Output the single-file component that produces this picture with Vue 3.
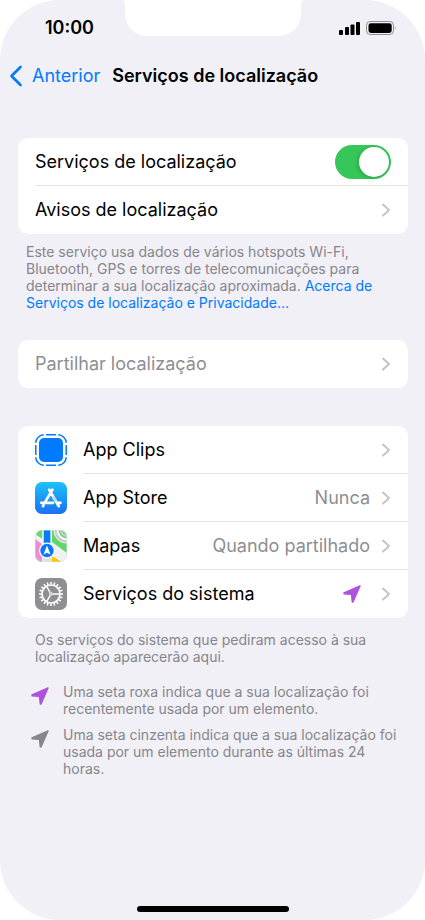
<script setup>
import { ref } from 'vue'

const enabled = ref(true)

const apps = [
  { id: 'clips', name: 'App Clips', value: '' },
  { id: 'store', name: 'App Store', value: 'Nunca' },
  { id: 'maps', name: 'Mapas', value: 'Quando partilhado' },
  { id: 'system', name: 'Serviços do sistema', value: '', arrow: true },
]

const legend = [
  { tone: 'purple', text: 'Uma seta roxa indica que a sua localização foi recentemente usada por um elemento.' },
  { tone: 'gray', text: 'Uma seta cinzenta indica que a sua localização foi usada por um elemento durante as últimas 24 horas.' },
]

const arrowPath = 'M17 1L1 8V8.700L8.500 9.400L9.300 17H10Z'
const teeth = Array.from({ length: 20 }, (_, i) => i * 18)
</script>

<template>
  <div class="phone">
    <svg class="notch" width="184" height="36" viewBox="0 0 184 36" aria-hidden="true">
      <path d="M0 0Q4 0 4 4V12C4 26 13 36 27 36H156C171 36 180 26 180 12V4Q180 0 184 0Z" fill="#fff" />
    </svg>

    <div class="status">
      <span class="time">10:00</span>
      <svg class="indicators" width="59" height="16" viewBox="0 0 59 16" aria-hidden="true">
        <rect x="1" y="10" width="4" height="5" rx="1" />
        <rect x="7" y="7" width="4" height="8" rx="1" />
        <rect x="12.500" y="4.500" width="4" height="10.500" rx="1" />
        <rect x="18" y="2" width="4" height="13" rx="1" />
        <rect x="28.500" y="1.500" width="27" height="13" rx="3.800" fill="none" stroke="#8f8f93" />
        <rect x="30.500" y="3.200" width="23.200" height="9.700" rx="2.400" />
        <path d="M56.800 6.300Q58.500 8 56.800 9.800Z" fill="#8f8f93" />
      </svg>
    </div>

    <header class="nav">
      <a class="back" href="#anterior">
        <svg width="14" height="22" viewBox="0 0 14 22" aria-hidden="true">
          <path d="M11.500 2L2.500 11L11.500 20" fill="none" stroke="currentColor" stroke-width="2.600" stroke-linecap="round" stroke-linejoin="round" />
        </svg>
        <span>Anterior</span>
      </a>
      <h1>Serviços de localização</h1>
    </header>

    <main>
      <section class="card">
        <label class="row">
          <span class="label">Serviços de localização</span>
          <input v-model="enabled" class="switch" type="checkbox" role="switch" />
        </label>
        <a class="row" href="#avisos">
          <span class="label">Avisos de localização</span>
          <svg class="chevron" width="10" height="14" viewBox="0 0 10 14" aria-hidden="true"><path d="M2 1.500L8 7L2 12.500" /></svg>
        </a>
      </section>
      <p class="note about">
        Este serviço usa dados de vários hotspots Wi-Fi, Bluetooth, GPS e torres de telecomunicações para determinar a sua localização aproximada.
        <a href="#privacidade">Acerca de Serviços de localização e Privacidade...</a>
      </p>

      <section class="card">
        <a class="row muted" href="#partilhar">
          <span class="label">Partilhar localização</span>
          <svg class="chevron" width="10" height="14" viewBox="0 0 10 14" aria-hidden="true"><path d="M2 1.500L8 7L2 12.500" /></svg>
        </a>
      </section>

      <section class="card apps">
        <a v-for="app in apps" :key="app.id" class="row" :href="'#' + app.id">
          <svg v-if="app.id === 'clips'" class="icon" viewBox="0 0 32 32" aria-hidden="true">
            <rect x="4" y="4" width="24" height="24" rx="5" fill="#007aff" />
            <g fill="none" stroke="#007aff" stroke-width="1.500">
              <path d="M11 .8H21M11 31.200H21M.8 11V21M31.200 11V21" />
              <path d="M.8 8.800Q.8 5.500 3.200 3.200Q5.500 .8 8.800 .8M23.200 .8Q26.500 .8 28.800 3.200Q31.200 5.500 31.200 8.800M31.200 23.200Q31.200 26.500 28.800 28.800Q26.500 31.200 23.200 31.200M8.800 31.200Q5.500 31.200 3.200 28.800Q.8 26.500 .8 23.200" />
            </g>
          </svg>

          <svg v-else-if="app.id === 'store'" class="icon" viewBox="0 0 32 32" aria-hidden="true">
            <defs>
              <linearGradient id="storeSky" x1="0" y1="0" x2="0" y2="1">
                <stop offset="0" stop-color="#19c3fb" />
                <stop offset="1" stop-color="#1d6ff2" />
              </linearGradient>
            </defs>
            <rect width="32" height="32" rx="7" fill="url(#storeSky)" />
            <g fill="none" stroke="#fff" stroke-width="2.700" stroke-linecap="round">
              <path d="M17.400 7.700L10.200 19.900M14.200 7.700L23.800 24.200M6.300 20.800H18M22.500 20.800H25.500M8.500 23.400L8 24.200" />
            </g>
            <path d="M18.300 14.300L21.400 19.600" stroke="#2591f6" stroke-width=".6" />
          </svg>

          <svg v-else-if="app.id === 'maps'" class="icon" viewBox="0 0 32 32" aria-hidden="true">
            <defs>
              <clipPath id="mapsTile"><rect width="32" height="32" rx="7" /></clipPath>
            </defs>
            <g clip-path="url(#mapsTile)">
              <rect width="32" height="32" fill="#f1f1f3" />
              <path d="M0 0H7.500V9L0 4Z" fill="#6bd868" />
              <path d="M0 9L7 14V32H0Z" fill="#f08bd3" />
              <path d="M17 0H32V23L17 12Z" fill="#5fd767" />
              <path d="M17 32V26L27 32Z" fill="#ffc800" />
              <path d="M21 0A11 11 0 0 0 32 11" fill="none" stroke="#fff" stroke-width="5" />
              <path d="M20.500 0A11.500 11.500 0 0 0 32 11.500M26 0A6 6 0 0 0 32 6" fill="none" stroke="#cbcbce" stroke-width="2.400" />
              <path d="M7.500 0H16.500V32H7.500Z" fill="#fff" />
              <path d="M8.700 0H15.400V20H8.700Z" fill="#087bf5" />
              <path d="M8 25H17V32H8Z" fill="#e2e2e6" />
              <circle cx="12" cy="20.500" r="8" fill="#fff" />
              <circle cx="12" cy="20.500" r="6.700" fill="#087bf5" />
              <path d="M12 15.400L15.500 24.500L12 22.800L8.500 24.500Z" fill="#fff" />
            </g>
            <rect x=".3" y=".3" width="31.400" height="31.400" rx="7" fill="none" stroke="#dcdce0" stroke-width=".6" />
          </svg>

          <svg v-else class="icon" viewBox="0 0 32 32" aria-hidden="true">
            <rect width="32" height="32" rx="7" fill="#8e8e93" />
            <g fill="none" stroke="#fff">
              <path v-for="a in teeth" :key="a" d="M16 4V6.500" stroke-width="1.600" :transform="`rotate(${a} 16 16)`" />
              <circle cx="16" cy="16" r="9" stroke-width="1.700" />
              <path d="M24.500 16H17.500M11.800 8.700L15.200 14.700M11.800 23.300L15.200 17.300" stroke-width="1.400" />
              <circle cx="16" cy="16" r="1.300" stroke-width="1" />
            </g>
          </svg>

          <span class="body">
            <span class="label">{{ app.name }}</span>
            <span v-if="app.value" class="value">{{ app.value }}</span>
            <svg v-if="app.arrow" class="arrow purple trailing" viewBox="0 0 18 18" aria-hidden="true"><path :d="arrowPath" /></svg>
            <svg class="chevron" width="10" height="14" viewBox="0 0 10 14" aria-hidden="true"><path d="M2 1.500L8 7L2 12.500" /></svg>
          </span>
        </a>
      </section>
      <p class="note explain">Os serviços do sistema que pediram acesso à sua localização aparecerão aqui.</p>

      <ul class="legend">
        <li v-for="item in legend" :key="item.tone">
          <svg class="arrow" :class="item.tone" viewBox="0 0 18 18" aria-hidden="true"><path :d="arrowPath" /></svg>
          <p class="note">{{ item.text }}</p>
        </li>
      </ul>
    </main>

    <div class="home"></div>
  </div>
</template>

<style>
body {
  background: #fff;
}
</style>

<style scoped>
.phone {
  position: relative;
  box-sizing: border-box;
  display: flex;
  flex-direction: column;
  min-height: 100vh;
  padding-bottom: 8px;
  overflow: hidden;
  border-radius: 60px;
  background: #f1f0f6;
  color: #000;
  font-family: Inter, "Liberation Sans", sans-serif;
  font-size: 18px;
  line-height: 24px;
}

a {
  color: inherit;
  text-decoration: none;
}

.notch {
  position: absolute;
  top: 0;
  left: 50%;
  transform: translateX(-50%);
}

.status {
  display: flex;
  align-items: center;
  justify-content: space-between;
  height: 56px;
  padding: 0 28px 0 45px;
}

.time {
  font-weight: 600;
}

.nav {
  display: flex;
  align-items: center;
  gap: 12px;
  height: 40px;
  padding: 0 9px;
  white-space: nowrap;
}

.back {
  display: flex;
  align-items: center;
  gap: 9px;
  color: #007aff;
}

h1 {
  margin: 0;
  font-size: 18px;
  line-height: 24px;
  font-weight: 600;
}

main {
  flex: 1;
  padding: 42px 17px 0 18px;
}

.card {
  overflow: hidden;
  border-radius: 10px;
  background: #fff;
}

.row {
  position: relative;
  display: flex;
  align-items: center;
  height: 48px;
  padding: 0 17px;
}

.row:not(:last-child)::after {
  content: "";
  position: absolute;
  right: 0;
  bottom: 0;
  left: 17px;
  height: 1px;
  background: #e4e4e7;
}

.apps .row:not(:last-child)::after {
  left: 65px;
}

.label {
  flex: 1;
}

.muted {
  color: #8e8e93;
}

.body {
  display: flex;
  flex: 1;
  align-items: center;
}

.icon {
  width: 32px;
  height: 32px;
  margin-right: 16px;
}

.value {
  margin-right: 11px;
  color: #8e8e93;
}

.chevron {
  fill: none;
  stroke: #c4c4c7;
  stroke-width: 2;
  stroke-linecap: round;
  stroke-linejoin: round;
}

.switch {
  appearance: none;
  display: flex;
  width: 56px;
  height: 34px;
  margin: 0;
  padding: 2px;
  box-sizing: border-box;
  border-radius: 17px;
  background: #e9e9eb;
}

.switch::before {
  content: "";
  width: 30px;
  height: 30px;
  border-radius: 50%;
  background: #fff;
  box-shadow: -1px 1px 4px rgba(0, 0, 0, 0.2);
}

.switch:checked {
  justify-content: flex-end;
  background: #35c759;
}

.note {
  margin: 0;
  color: #86868b;
  font-size: 14px;
  line-height: 17px;
}

.about {
  padding: 9px 17px 29px 8px;
}

.about a {
  color: #007aff;
}

.apps {
  margin-top: 38px;
}

.explain {
  padding: 13px 17px 0;
}

.legend {
  display: flex;
  flex-direction: column;
  gap: 9px;
  margin: 18px 0 0;
  padding: 0 8px 0 13px;
  list-style: none;
}

.legend li {
  display: flex;
  gap: 14px;
}

.arrow {
  flex: none;
  width: 18px;
  height: 18px;
  margin-top: 4px;
  stroke-width: 1.400;
  stroke-linejoin: round;
}

.trailing {
  margin: 0 20px 0 0;
}

.purple {
  fill: #af52de;
  stroke: #af52de;
}

.gray {
  fill: #86868b;
  stroke: #86868b;
}

.home {
  align-self: center;
  width: 152px;
  height: 6px;
  border-radius: 3px;
  background: #000;
}
</style>
